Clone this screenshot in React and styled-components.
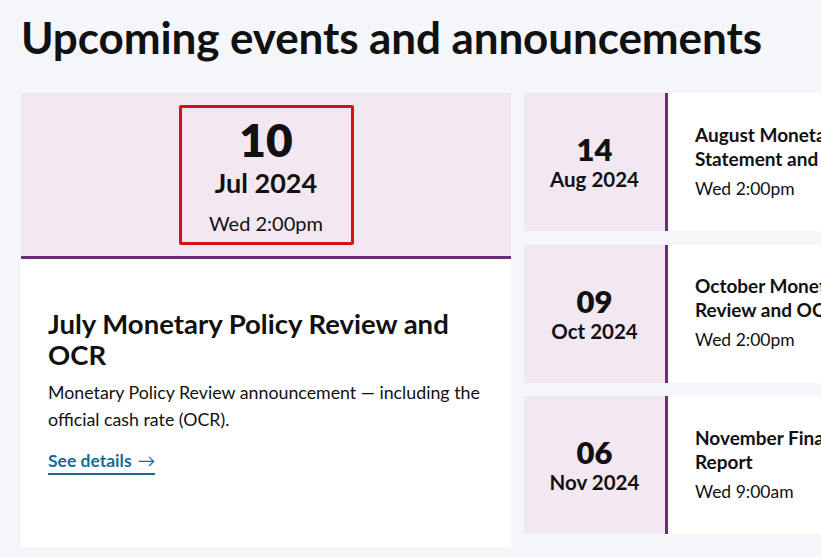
import React from "react";
import styled, { createGlobalStyle } from "styled-components";

const GlobalStyle = createGlobalStyle`
  body {
    margin: 0;
    background: #f5f6fa;
    font-family: "Lato", "Liberation Sans", sans-serif;
    color: #111;
    overflow: hidden;
  }
`;

const events = [
  { day: "14", month: "Aug 2024", title: "August Monetary Policy Statement and OCR", time: "Wed 2:00pm" },
  { day: "09", month: "Oct 2024", title: "October Monetary Policy Review and OCR", time: "Wed 2:00pm" },
  { day: "06", month: "Nov 2024", title: "November Financial Stability Report", time: "Wed 9:00am" },
];

export default function App() {
  return (
    <Page>
      <GlobalStyle />
      <Heading>Upcoming events and announcements</Heading>
      <Grid>
        <Feature>
          <FeatureDate>
            <Highlight>
              <BigDay>10</BigDay>
              <BigMonth>Jul 2024</BigMonth>
              <BigTime>Wed 2:00pm</BigTime>
            </Highlight>
          </FeatureDate>
          <FeatureBody>
            <FeatureTitle>July Monetary Policy Review and OCR</FeatureTitle>
            <Desc>
              Monetary Policy Review announcement — including the official cash
              rate (OCR).
            </Desc>
            <Link href="#">
              See details <span>→</span>
            </Link>
          </FeatureBody>
        </Feature>
        <List>
          {events.map((e) => (
            <Card key={e.day}>
              <DateBox>
                <Day>{e.day}</Day>
                <Month>{e.month}</Month>
              </DateBox>
              <CardBody>
                <CardTitle>{e.title}</CardTitle>
                <Time>{e.time}</Time>
              </CardBody>
            </Card>
          ))}
        </List>
      </Grid>
    </Page>
  );
}

const Page = styled.main`
  padding: 10px 21px 0;
  width: 1100px;
`;

const Heading = styled.h1`
  margin: 0 0 29px;
  font-size: 44px;
  font-weight: 700;
  line-height: 54px;
  letter-spacing: -0.1px;
`;

const Grid = styled.div`
  display: grid;
  grid-template-columns: 490px 490px;
  gap: 13px;
  align-items: start;
`;

const Feature = styled.article`
  background: #fff;
  height: 454px;
  display: flex;
  flex-direction: column;
`;

const FeatureDate = styled.div`
  background: #f1e8f2;
  height: 166px;
  border-bottom: 3px solid #6b2c7f;
  display: flex;
  justify-content: center;
  padding-top: 12px;
  box-sizing: border-box;
`;

const Highlight = styled.div`
  width: 175px;
  height: 140px;
  box-sizing: border-box;
  border: 3px solid #d3121b;
  border-radius: 2px;
  display: flex;
  flex-direction: column;
  align-items: center;
  padding-top: 7px;
`;

const BigDay = styled.div`
  font-size: 46px;
  font-weight: 800;
  line-height: 50px;
`;

const BigMonth = styled.div`
  font-size: 27px;
  font-weight: 700;
  line-height: 30px;
  margin-top: 3px;
`;

const BigTime = styled.div`
  font-size: 20px;
  line-height: 24px;
  margin-top: 13px;
`;

const FeatureBody = styled.div`
  padding: 49px 27px 0;
`;

const FeatureTitle = styled.h2`
  margin: 0 0 9px;
  font-size: 27.5px;
  font-weight: 700;
  line-height: 31px;
`;

const Desc = styled.p`
  margin: 0 0 17px;
  font-size: 17.8px;
  line-height: 27px;
`;

const Link = styled.a`
  display: inline-block;
  color: #156d97;
  font-weight: 700;
  font-size: 17.5px;
  text-decoration: none;
  border-bottom: 2px solid #156d97;
  padding-bottom: 2px;
  span {
    font-weight: 400;
    margin-left: 2px;
  }
`;

const List = styled.div`
  display: flex;
  flex-direction: column;
  gap: 13.5px;
`;

const Card = styled.article`
  display: flex;
  height: 138px;
  background: #fff;
`;

const DateBox = styled.div`
  width: 141px;
  flex-shrink: 0;
  background: #f1e8f2;
  border-right: 3px solid #6b2c7f;
  display: flex;
  flex-direction: column;
  align-items: center;
  justify-content: center;
`;

const Day = styled.div`
  font-size: 31px;
  font-weight: 800;
  line-height: 34px;
`;

const Month = styled.div`
  font-size: 20.5px;
  font-weight: 700;
  line-height: 26px;
`;

const CardBody = styled.div`
  padding: 0 27px 2px;
  display: flex;
  flex-direction: column;
  justify-content: center;
`;

const CardTitle = styled.h3`
  margin: 0 0 7px;
  font-size: 19px;
  font-weight: 700;
  line-height: 24px;
  width: 250px;
`;

const Time = styled.div`
  font-size: 17.5px;
  line-height: 22px;
`;
